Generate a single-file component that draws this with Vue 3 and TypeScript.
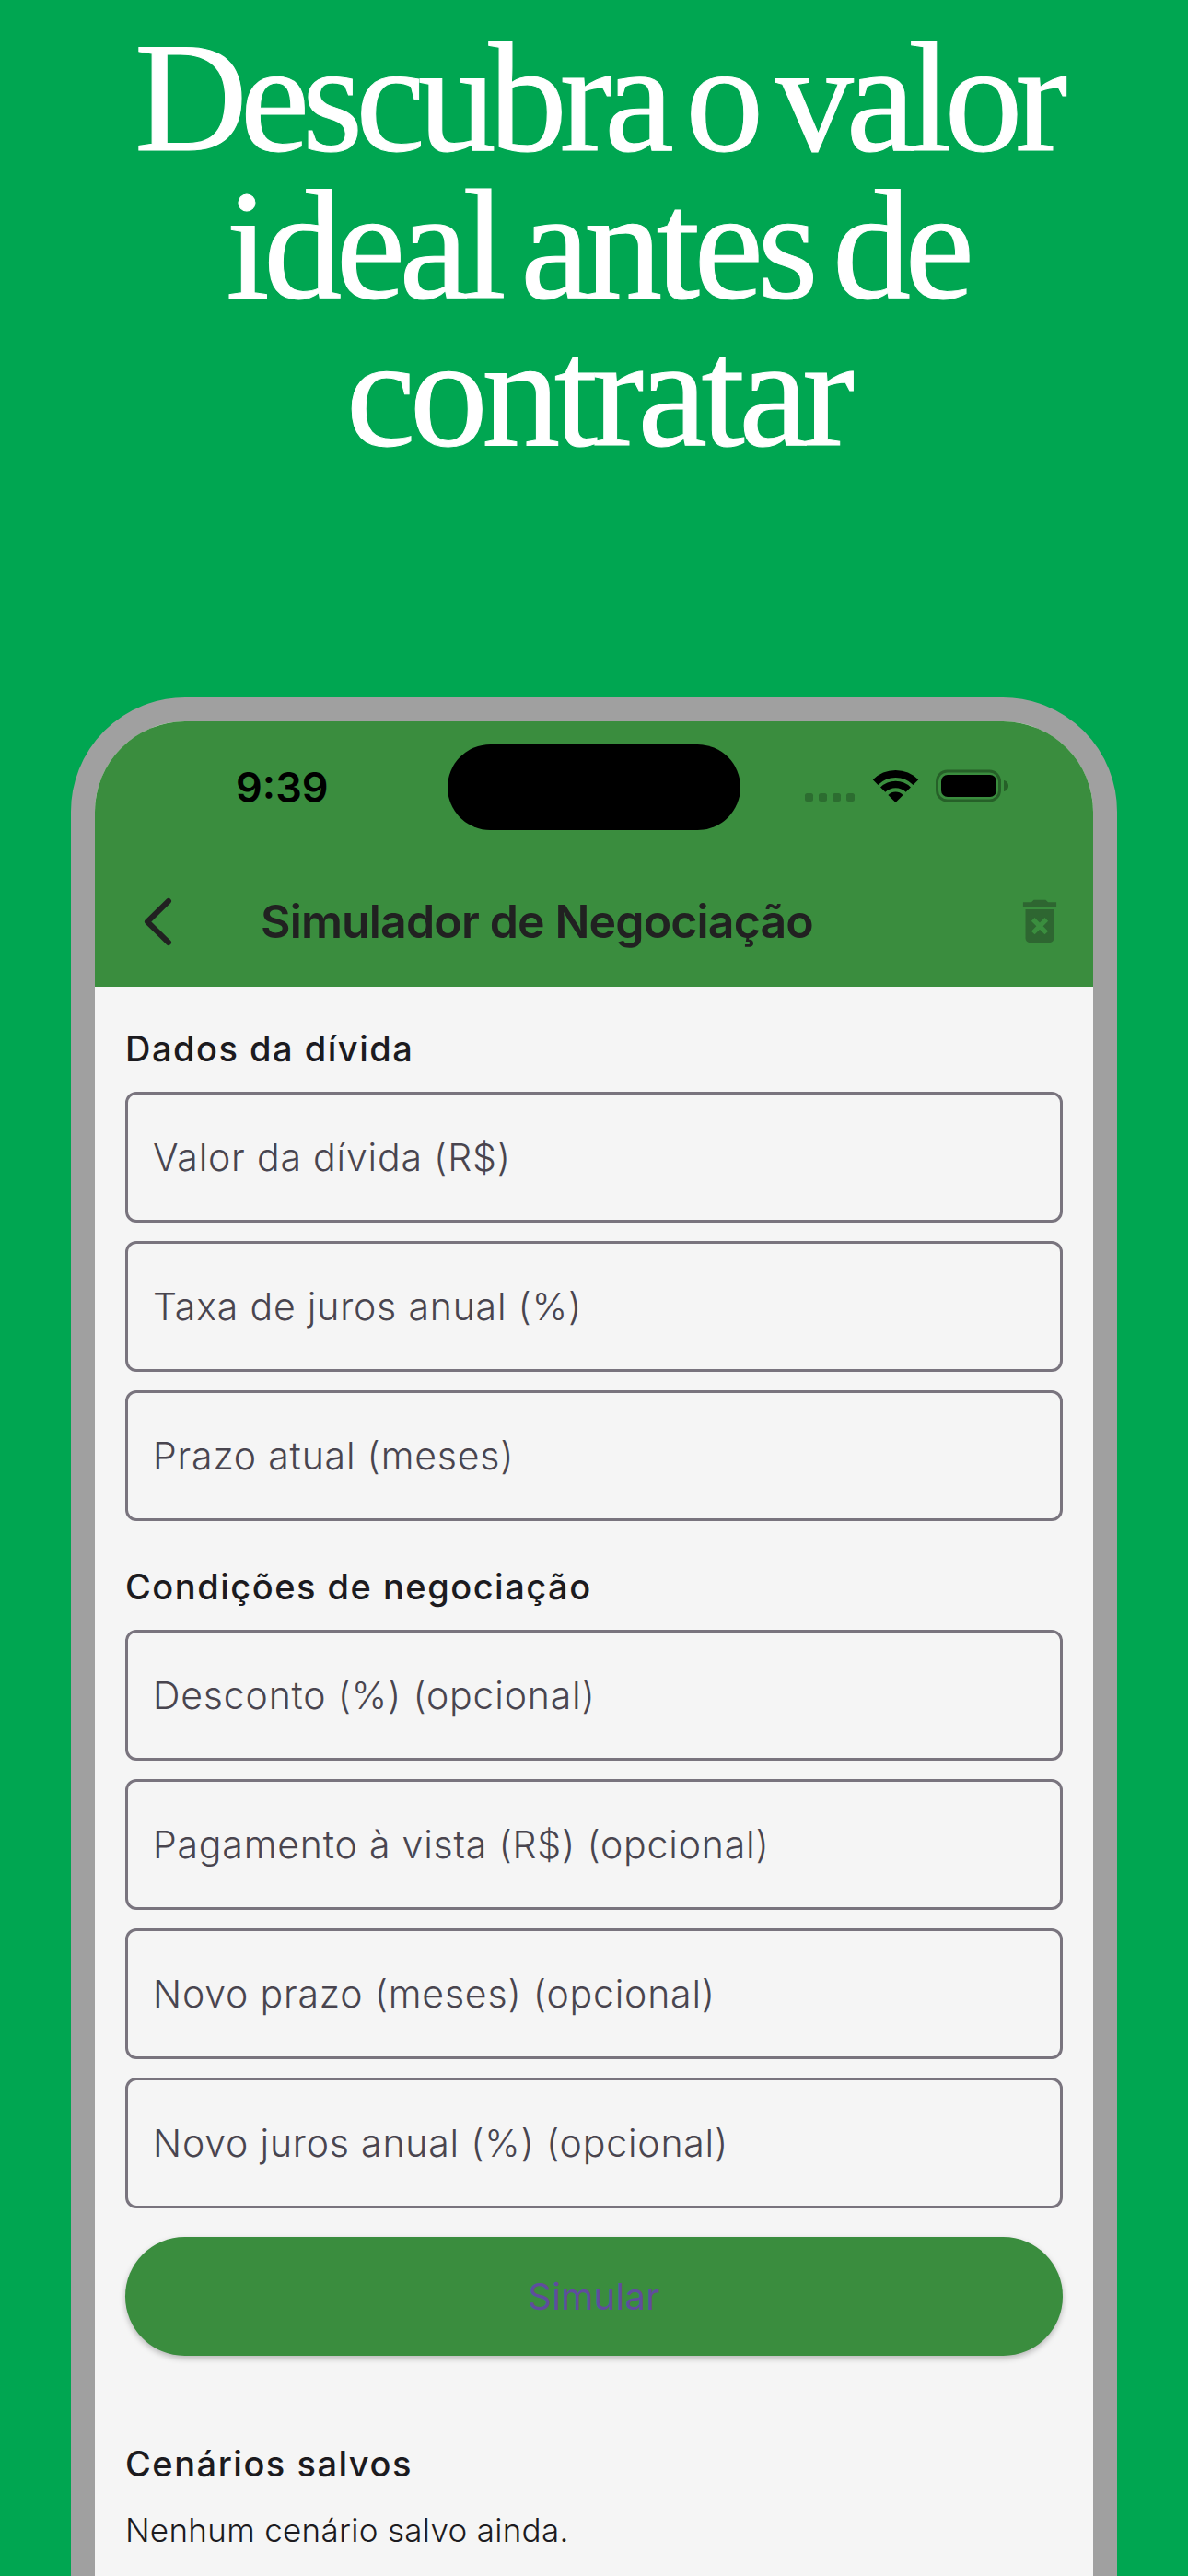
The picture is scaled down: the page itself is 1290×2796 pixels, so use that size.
<script setup lang="ts">
const debtFields = ['Valor da dívida (R$)', 'Taxa de juros anual (%)', 'Prazo atual (meses)']
const negotiationFields = [
  'Desconto (%) (opcional)',
  'Pagamento à vista (R$) (opcional)',
  'Novo prazo (meses) (opcional)',
  'Novo juros anual (%) (opcional)',
]
</script>

<template>
  <main class="page">
    <h1 class="headline">
      <span class="first-line">Descubra o valor</span>
      <span>ideal antes de</span>
      <span>contratar</span>
    </h1>

    <section class="phone">
      <header class="app-header">
        <div class="status-bar">
          <span class="time">9:39</span>
          <div class="island"></div>
          <svg class="status-icons" width="222" height="36" viewBox="0 0 222 36">
            <g fill="#2c6d30">
              <rect x="1" y="26" width="9" height="9" rx="2.5" />
              <rect x="16" y="26" width="9" height="9" rx="2.5" />
              <rect x="31" y="26" width="9" height="9" rx="2.5" />
              <rect x="46" y="26" width="9" height="9" rx="2.5" />
            </g>
            <g fill="none" stroke="#000">
              <path d="M77.6 14.1A31 31 0 0 1 121.4 14.1" stroke-width="8" />
              <path d="M85.7 22.2A19.5 19.5 0 0 1 113.3 22.2" stroke-width="7.5" />
            </g>
            <path d="M99.5 36L91.4 27.9A11.5 11.5 0 0 1 107.6 27.9Z" fill="#000" />
            <rect x="144.5" y="2" width="68" height="32" rx="11" fill="none" stroke="#266028" stroke-width="3" />
            <rect x="149" y="6" width="60" height="24" rx="7" fill="#000" />
            <path d="M217 12c3 .5 5 3 5 6s-2 5.500-5 6z" fill="#266028" />
          </svg>
        </div>
        <div class="toolbar">
          <svg class="back" width="36" height="56" viewBox="0 0 36 56">
            <path d="M29 6L6 28.500L29 51" fill="none" stroke="#212121" stroke-width="6" stroke-linecap="round" stroke-linejoin="round" />
          </svg>
          <span class="title">Simulador de Negociação</span>
          <svg class="trash" width="62" height="62" viewBox="0 0 24 24">
            <path
              fill="#2e6631"
              d="M6 19c0 1.100.9 2 2 2h8c1.100 0 2-.9 2-2V7H6v12zm2.460-7.120l1.410-1.410L12 12.590l2.120-2.120 1.410 1.410L13.410 14l2.120 2.120-1.410 1.410L12 15.410l-2.120 2.120-1.410-1.410L10.590 14l-2.130-2.120zM15.500 4l-1-1h-5l-1 1H5v2h14V4z"
            />
          </svg>
        </div>
      </header>

      <div class="content">
        <h2 class="section-title">Dados da dívida</h2>
        <div class="fields">
          <div v-for="field in debtFields" :key="field" class="field">{{ field }}</div>
        </div>

        <h2 class="section-title second">Condições de negociação</h2>
        <div class="fields">
          <div v-for="field in negotiationFields" :key="field" class="field">{{ field }}</div>
        </div>

        <button class="simulate" type="button">Simular</button>

        <h2 class="section-title saved">Cenários salvos</h2>
        <p class="empty">Nenhum cenário salvo ainda.</p>
      </div>
    </section>
  </main>
</template>

<style scoped>
.page {
  height: 2796px;
  overflow: hidden;
  background: #00a651;
  font-family: Inter, 'Liberation Sans', sans-serif;
}

.headline {
  margin: 0;
  padding: 26px 0 0 7px;
  font-family: 'Liberation Serif', serif;
  font-size: 170px;
  font-weight: 400;
  line-height: 160px;
  letter-spacing: -6.5px;
  word-spacing: -14px;
  text-align: center;
  color: #fff;
  -webkit-text-stroke: 1px #fff;
}

.headline span {
  display: block;
}

.headline .first-line {
  letter-spacing: -8px;
}

.phone {
  margin: 251px 77px 0;
  height: 2400px;
  border: 26px solid #a0a0a0;
  border-radius: 124px;
  overflow: hidden;
  background: #f5f5f5;
}

.app-header {
  background: #3a8d3e;
}

.status-bar {
  display: grid;
  grid-template-columns: 1fr 318px 1fr;
  align-items: center;
  padding-top: 25px;
  height: 118px;
  box-sizing: border-box;
}

.time {
  padding-left: 153px;
  font-size: 45px;
  font-weight: 600;
  line-height: 1;
  color: #000;
}

.island {
  height: 93px;
  border-radius: 47px;
  background: #000;
}

.status-icons {
  justify-self: end;
  margin-right: 92px;
  margin-bottom: 4px;
}

.toolbar {
  display: flex;
  align-items: center;
  height: 170px;
  padding: 28px 27px 0 51px;
  box-sizing: border-box;
}

.title {
  flex: 1;
  margin-left: 93px;
  font-size: 50px;
  font-weight: 600;
  letter-spacing: -0.85px;
  color: #212121;
}

.content {
  padding: 44px 33px 0;
}

.section-title {
  margin: 0 0 24px;
  font-size: 38px;
  font-weight: 500;
  line-height: 46px;
  letter-spacing: 1.5px;
  color: #1c1b1f;
}

.section-title.second {
  margin-top: 48px;
}

.section-title.saved {
  margin-top: 94px;
  margin-bottom: 27px;
}

.fields {
  display: flex;
  flex-direction: column;
  gap: 20px;
}

.field {
  display: flex;
  align-items: center;
  height: 142px;
  box-sizing: border-box;
  padding-left: 27px;
  border: 3px solid #79747e;
  border-radius: 12px;
  font-size: 41px;
  font-weight: 300;
  letter-spacing: 0.8px;
  color: #49454f;
}

.simulate {
  display: block;
  width: 100%;
  height: 129px;
  margin-top: 31px;
  border: none;
  border-radius: 65px;
  background: #3a8d3e;
  box-shadow: 0 3px 6px rgba(0, 0, 0, 0.25);
  font-family: inherit;
  font-size: 40px;
  font-weight: 400;
  letter-spacing: 0.3px;
  color: #5f4d9d;
}

.empty {
  margin: 0;
  font-size: 35px;
  font-weight: 300;
  line-height: 45px;
  letter-spacing: 0.3px;
  color: #1c1b1f;
}
</style>
